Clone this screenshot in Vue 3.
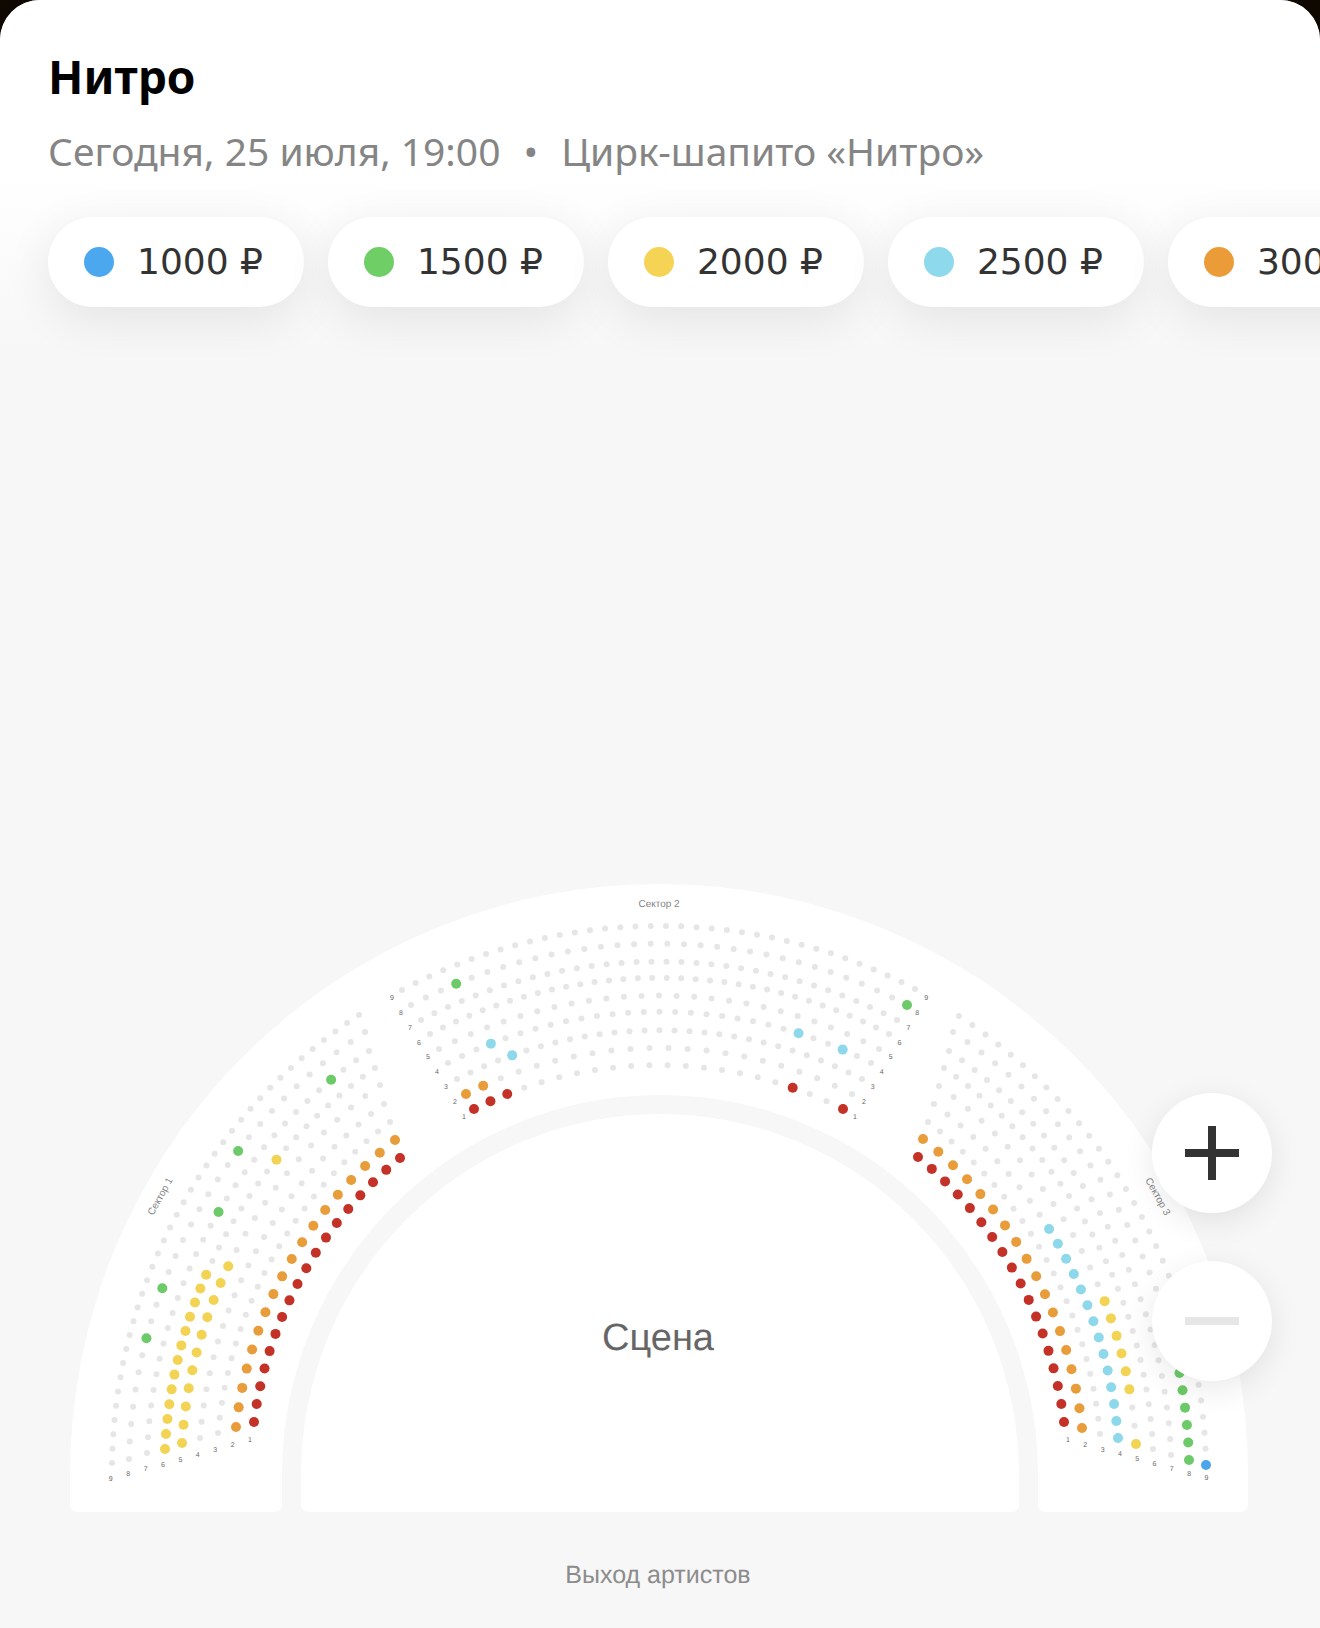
<template>
  <div class="page">
    <main class="sheet">
      <header class="header">
        <h1 class="header__title">Нитро</h1>
        <p class="header__info">
          <span>Сегодня, 25 июля, 19:00</span>
          <span>•</span>
          <span>Цирк-шапито «Нитро»</span>
        </p>
        <ul class="prices">
          <li v-for="price in prices" :key="price.value">
            <button type="button" class="price">
              <span class="price__dot" :class="`price__dot--${price.color}`"></span>
              {{ price.value }} ₽
            </button>
          </li>
        </ul>
      </header>

      <section class="hall">
        <svg class="hall__map" viewBox="0 860 1320 768" role="img" aria-label="Схема зала">
          <!-- Трибуны и сцена -->
          <path
            class="floor"
            d="M70 1475 A589 591 0 0 1 1248 1475 V1504 Q1248 1512 1240 1512 H1046 Q1038 1512 1038 1504 V1475 A378 380 0 0 0 282 1475 V1504 Q282 1512 274 1512 H78 Q70 1512 70 1504 Z"
          />
          <path
            class="floor"
            d="M301 1475 A359 361 0 0 1 1019 1475 V1504 Q1019 1512 1011 1512 H309 Q301 1512 301 1504 Z"
          />

          <!-- Места -->
          <circle
            v-for="seat in seats"
            :key="seat.id"
            class="seat"
            :class="`seat--${seat.color}`"
            :cx="seat.x"
            :cy="seat.y"
            :r="seat.color === 'none' ? 3 : 5"
          />

          <!-- Номера рядов -->
          <text v-for="label in rowLabels" :key="label.id" class="row-label" :x="label.x" :y="label.y">
            {{ label.row }}
          </text>

          <text class="sector-label" transform="translate(163 1198) rotate(-61)">Сектор 1</text>
          <text class="sector-label" transform="translate(659 907)">Сектор 2</text>
          <text class="sector-label" transform="translate(1155 1198) rotate(61)">Сектор 3</text>

          <text class="stage-label" x="658" y="1350">Сцена</text>
          <text class="exit-label" x="658" y="1583">Выход артистов</text>
        </svg>

        <div class="zoom">
          <button type="button" class="zoom__button" aria-label="Приблизить">
            <svg viewBox="0 0 54 54" width="54" height="54">
              <path d="M27 0V54M0 27H54" />
            </svg>
          </button>
          <button type="button" class="zoom__button" aria-label="Отдалить" disabled>
            <svg viewBox="0 0 54 54" width="54" height="54">
              <path d="M0 27H54" />
            </svg>
          </button>
        </div>
      </section>
    </main>
  </div>
</template>

<script setup>
const prices = [
  { value: 1000, color: "blue" },
  { value: 1500, color: "green" },
  { value: 2000, color: "yellow" },
  { value: 2500, color: "sky" },
  { value: 3000, color: "orange" },
];

const range = (from, to) =>
  Array.from({ length: to - from + 1 }, (_, i) => from + i);

// Ряды 1–9 каждого сектора: крайние места, количество, свободные места по цветам
const sectors = [
  [
    { from: [254, 1422], to: [400, 1158], count: 18, free: { red: range(0, 17) } },
    { from: [236, 1427], to: [395, 1140], count: 18, free: { orange: range(0, 17) } },
    { from: [218, 1433], to: [390, 1122], count: 25 },
    { from: [200, 1438], to: [384, 1104], count: 25 },
    { from: [182, 1443], to: [380, 1085], count: 24, free: { yellow: range(0, 10) } },
    { from: [165, 1449], to: [375, 1068], count: 31, free: { yellow: [...range(0, 12), 21] } },
    { from: [147, 1453], to: [369, 1051], count: 31, free: { green: [16, 27] } },
    { from: [129, 1459], to: [365, 1032], count: 30, free: { green: [7, 10, 19] } },
    { from: [112, 1463], to: [359, 1015], count: 38 },
  ],
  [
    { from: [474, 1109], to: [843, 1109], count: 22, free: { red: [0, 1, 2, 18, 21] } },
    { from: [466, 1094], to: [852, 1094], count: 22, free: { orange: [0, 1] } },
    { from: [457, 1079], to: [862, 1079], count: 29, free: { sky: [4] } },
    { from: [448, 1063], to: [871, 1063], count: 29, free: { sky: [3, 23, 26] } },
    { from: [439, 1049], to: [879, 1049], count: 27 },
    { from: [430, 1034], to: [889, 1034], count: 34 },
    { from: [421, 1020], to: [897, 1020], count: 34 },
    { from: [411, 1005], to: [907, 1005], count: 32, free: { green: [3, 31] } },
    { from: [402, 990], to: [915, 989], count: 36 },
  ],
  [
    { from: [918, 1157], to: [1064, 1422], count: 18, free: { red: range(0, 17) } },
    { from: [923, 1139], to: [1082, 1428], count: 18, free: { orange: range(0, 17) } },
    { from: [928, 1122], to: [1100, 1434], count: 25 },
    { from: [934, 1104], to: [1118, 1438], count: 24, free: { sky: range(10, 23) } },
    { from: [939, 1086], to: [1136, 1444], count: 24, free: { yellow: [...range(15, 20), 23] } },
    { from: [944, 1068], to: [1153, 1449], count: 31 },
    { from: [949, 1051], to: [1171, 1455], count: 31 },
    { from: [953, 1032], to: [1189, 1460], count: 30, free: { green: range(24, 29) } },
    { from: [959, 1016], to: [1206, 1465], count: 34, free: { blue: [33] } },
  ],
];

// Раскладывает места ряда равномерно по дуге между крайними точками
function placeRow({ from, to, count, free = {} }, radius, id) {
  const dx = to[0] - from[0];
  const dy = to[1] - from[1];
  const chord = Math.hypot(dx, dy);
  const height = Math.sqrt(radius ** 2 - (chord / 2) ** 2);
  const cx = (from[0] + to[0]) / 2 - (dy / chord) * height;
  const cy = (from[1] + to[1]) / 2 + (dx / chord) * height;
  const start = Math.atan2(from[1] - cy, from[0] - cx);
  const sweep = 2 * Math.asin(chord / 2 / radius);

  return range(0, count - 1).map((i) => {
    const angle = start + (sweep * i) / (count - 1);
    const color = Object.keys(free).find((key) => free[key].includes(i));
    return {
      id: `${id}-${i}`,
      x: cx + radius * Math.cos(angle),
      y: cy + radius * Math.sin(angle),
      color: color || "none",
    };
  });
}

// В первом секторе места считаются снизу вверх, то есть тоже по часовой стрелке
const seats = sectors.flatMap((rows, s) =>
  rows.flatMap((row, r) => placeRow(row, 410 + 17.4 * r, `${s}-${r}`))
);

// Колонки номеров: позиция первого ряда и шаг до следующего
const labelLines = [
  { x: 250, y: 1442, dx: -17.4, dy: 4.9 },
  { x: 464, y: 1119, dx: -9, dy: -14.9 },
  { x: 855, y: 1119, dx: 8.9, dy: -14.9 },
  { x: 1068, y: 1442, dx: 17.3, dy: 4.8 },
];

const rowLabels = labelLines.flatMap((line, l) =>
  range(1, 9).map((row) => ({
    id: `${l}-${row}`,
    row,
    x: line.x + line.dx * (row - 1),
    y: line.y + line.dy * (row - 1),
  }))
);
</script>

<style>
body {
  margin: 0;
}
</style>

<style scoped>
.page {
  background: #0f0801;
}

.sheet {
  display: flex;
  flex-direction: column;
  min-height: 100vh;
  overflow: hidden;
  border-radius: 40px 40px 0 0;
  background: #f7f7f7;
  font-family: "Noto Sans", "Open Sans", sans-serif;
}

/* ── Шапка ── */
.header {
  padding-top: 46px;
  background: linear-gradient(to bottom, #fff 0, #fff 170px, #f7f7f7 350px);
}

.header__title {
  margin: 0;
  padding: 0 48px;
  font-size: 46px;
  font-weight: 700;
  line-height: 60px;
  color: #000;
}

.header__info {
  display: flex;
  gap: 23px;
  margin: 21px 0 0;
  padding: 0 48px;
  font-size: 39px;
  line-height: 48px;
  white-space: nowrap;
  color: #858585;
}

/* ── Цены ── */
.prices {
  display: flex;
  gap: 24px;
  margin: 0;
  padding: 42px 48px 60px;
  overflow-x: auto;
  scrollbar-width: none;
  list-style: none;
}

.price {
  display: flex;
  align-items: center;
  gap: 23px;
  height: 90px;
  padding: 0 41px 0 36px;
  border: 0;
  border-radius: 45px;
  background: #fff;
  box-shadow: 0 12px 48px rgba(0, 0, 0, 0.09);
  font-family: "DejaVu Sans", sans-serif;
  font-size: 36px;
  line-height: 48px;
  white-space: nowrap;
  color: #333;
}

.price__dot {
  width: 30px;
  height: 30px;
  border-radius: 50%;
}

.price__dot--blue {
  background: #4ba8ee;
}

.price__dot--green {
  background: #6fce66;
}

.price__dot--yellow {
  background: #f5d455;
}

.price__dot--sky {
  background: #8fd9ec;
}

.price__dot--orange {
  background: #eb9c38;
}

/* ── Схема зала ── */
.hall {
  position: relative;
  display: flex;
  flex: 1;
  align-items: flex-end;
}

.hall__map {
  display: block;
  width: 100%;
  height: auto;
  font-family: "Liberation Sans", Arial, sans-serif;
  text-anchor: middle;
  text-rendering: geometricPrecision;
}

.floor {
  fill: #fff;
}

.seat--none {
  fill: #e6e6e6;
}

.seat--blue {
  fill: #4ba5e8;
}

.seat--green {
  fill: #6dca68;
}

.seat--yellow {
  fill: #f2d353;
}

.seat--sky {
  fill: #8dd8ea;
}

.seat--orange {
  fill: #e89c3a;
}

.seat--red {
  fill: #c43126;
}

.row-label {
  font-size: 7px;
  fill: #666;
}

.sector-label {
  font-size: 10px;
  fill: #858585;
}

.stage-label {
  font-size: 38px;
  fill: #666;
}

.exit-label {
  font-size: 25px;
  fill: #8c8c8c;
}

/* ── Масштаб ── */
.zoom {
  position: absolute;
  right: 48px;
  bottom: 247px;
  display: flex;
  flex-direction: column;
  gap: 48px;
}

.zoom__button {
  display: flex;
  align-items: center;
  justify-content: center;
  width: 120px;
  height: 120px;
  padding: 0;
  border: 0;
  border-radius: 50%;
  background: #fff;
  box-shadow: 0 8px 32px rgba(0, 0, 0, 0.09);
  color: #333;
}

.zoom__button:disabled {
  color: #e6e6e6;
}

.zoom__button path {
  fill: none;
  stroke: currentColor;
  stroke-width: 8;
}
</style>
